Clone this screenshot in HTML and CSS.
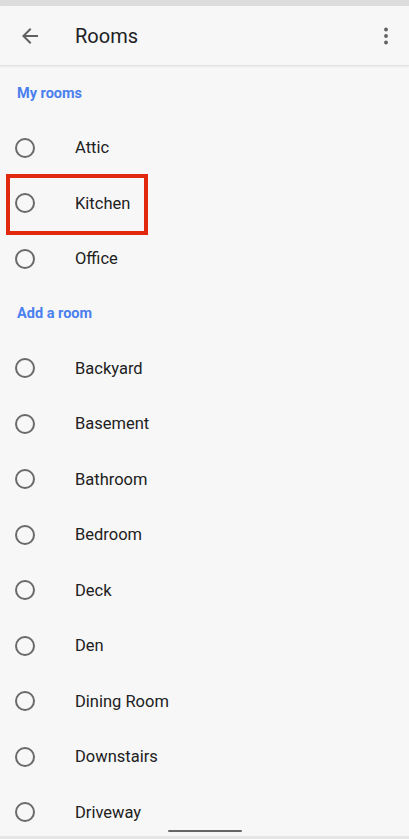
FILE: index.html
```html
<!DOCTYPE html>
<html lang="en">
<head>
    <meta charset="UTF-8">
    <meta name="viewport" content="width=device-width, initial-scale=1.0">
    <title>Rooms</title>
    <link rel="stylesheet" href="styles.css">
</head>
<body>
    <div class="status"></div>

    <div class="toolbar">
        <button class="icon-btn back" aria-label="Back">
            <svg width="24" height="24" viewBox="0 0 24 24">
                <path d="M20 11H7.83l5.59-5.59L12 4l-8 8 8 8 1.41-1.41L7.83 13H20v-2z" fill="#616161"/>
            </svg>
        </button>
        <h1 class="title">Rooms</h1>
        <button class="icon-btn more" aria-label="More">
            <svg width="24" height="24" viewBox="0 0 24 24">
                <circle cx="12" cy="5.5" r="1.9" fill="#616161"/>
                <circle cx="12" cy="12" r="1.9" fill="#616161"/>
                <circle cx="12" cy="18.5" r="1.9" fill="#616161"/>
            </svg>
        </button>
    </div>

    <div class="list">
        <div class="section">My rooms</div>
        <label class="room"><span class="radio"></span><span>Attic</span></label>
        <label class="room selected-box"><span class="radio"></span><span>Kitchen</span></label>
        <label class="room"><span class="radio"></span><span>Office</span></label>

        <div class="section">Add a room</div>
        <label class="room"><span class="radio"></span><span>Backyard</span></label>
        <label class="room"><span class="radio"></span><span>Basement</span></label>
        <label class="room"><span class="radio"></span><span>Bathroom</span></label>
        <label class="room"><span class="radio"></span><span>Bedroom</span></label>
        <label class="room"><span class="radio"></span><span>Deck</span></label>
        <label class="room"><span class="radio"></span><span>Den</span></label>
        <label class="room"><span class="radio"></span><span>Dining Room</span></label>
        <label class="room"><span class="radio"></span><span>Downstairs</span></label>
        <label class="room"><span class="radio"></span><span>Driveway</span></label>
    </div>

    <div class="nav-bar">
        <div class="handle"></div>
    </div>
</body>
</html>
```

FILE: styles.css
```css
html, body {
    height: 100%;
}

body {
    margin: 0;
    background: #f7f7f7;
    font-family: Roboto, "Liberation Sans", sans-serif;
    color: #212121;
    overflow: hidden;
}

.status {
    height: 6px;
    background: #dcdcdc;
}

.toolbar {
    display: flex;
    align-items: center;
    height: 59px;
    background: #f7f7f7;
    border-bottom: 1px solid #e2e2e2;
    box-shadow: 0 1px 2px rgba(0,0,0,0.06);
    position: relative;
}

.icon-btn {
    background: none;
    border: none;
    padding: 0;
    width: 24px;
    height: 24px;
    display: flex;
}

.back {
    margin-left: 18px;
}

.title {
    flex: 1;
    margin: 0 0 0 33px;
    font-size: 20px;
    font-weight: 400;
    color: #202124;
}

.more {
    margin-right: 11px;
}

.section {
    height: 54px;
    display: flex;
    align-items: center;
    padding-left: 17px;
    font-size: 14.5px;
    font-weight: 700;
    color: #4a80ee;
}

.room {
    height: 55.5px;
    display: flex;
    align-items: center;
    font-size: 16.5px;
    color: #212121;
}

.radio {
    width: 16px;
    height: 16px;
    border: 2px solid #6a6a6a;
    border-radius: 50%;
    margin: 0 40px 0 15px;
    flex-shrink: 0;
}

.selected-box {
    position: relative;
}

.selected-box::after {
    content: "";
    position: absolute;
    left: 6px;
    top: -2px;
    width: 134px;
    height: 53px;
    border: 4px solid #e2290d;
}

.nav-bar {
    position: fixed;
    left: 0;
    right: 0;
    bottom: 0;
    height: 6px;
    border-bottom: 3px solid #e6e6e6;
}

.handle {
    width: 74px;
    height: 2px;
    margin: 0 auto;
    background: #666;
    border-radius: 1px;
}
```
